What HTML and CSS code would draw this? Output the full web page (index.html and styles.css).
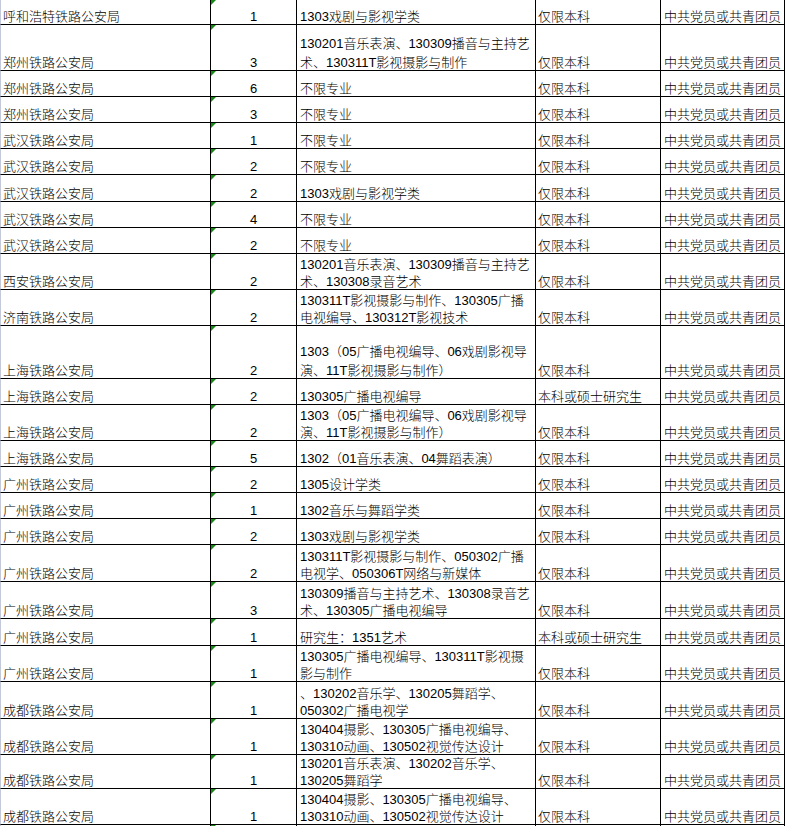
FILE: index.html
```html
<!DOCTYPE html>
<html lang="zh-CN">
<head>
<meta charset="utf-8">
<title>铁路公安局招录岗位表</title>
<link rel="stylesheet" href="styles.css">
</head>
<body>
<div class="sheet">
  <div class="row r25"><div class="c c1">呼和浩特铁路公安局</div><div class="c c2">1</div><div class="c c3">1303戏剧与影视学类</div><div class="c c4">仅限本科</div><div class="c c5">中共党员或共青团员</div></div>
  <div class="row r46 loose"><div class="c c1">郑州铁路公安局</div><div class="c c2">3</div><div class="c c3">130201音乐表演、130309播音与主持艺<br>术、130311T影视摄影与制作</div><div class="c c4">仅限本科</div><div class="c c5">中共党员或共青团员</div></div>
  <div class="row r26"><div class="c c1">郑州铁路公安局</div><div class="c c2">6</div><div class="c c3">不限专业</div><div class="c c4">仅限本科</div><div class="c c5">中共党员或共青团员</div></div>
  <div class="row r26"><div class="c c1">郑州铁路公安局</div><div class="c c2">3</div><div class="c c3">不限专业</div><div class="c c4">仅限本科</div><div class="c c5">中共党员或共青团员</div></div>
  <div class="row r26"><div class="c c1">武汉铁路公安局</div><div class="c c2">1</div><div class="c c3">不限专业</div><div class="c c4">仅限本科</div><div class="c c5">中共党员或共青团员</div></div>
  <div class="row r26"><div class="c c1">武汉铁路公安局</div><div class="c c2">2</div><div class="c c3">不限专业</div><div class="c c4">仅限本科</div><div class="c c5">中共党员或共青团员</div></div>
  <div class="row r27"><div class="c c1">武汉铁路公安局</div><div class="c c2">2</div><div class="c c3">1303戏剧与影视学类</div><div class="c c4">仅限本科</div><div class="c c5">中共党员或共青团员</div></div>
  <div class="row r26"><div class="c c1">武汉铁路公安局</div><div class="c c2">4</div><div class="c c3">不限专业</div><div class="c c4">仅限本科</div><div class="c c5">中共党员或共青团员</div></div>
  <div class="row r26"><div class="c c1">武汉铁路公安局</div><div class="c c2">2</div><div class="c c3">不限专业</div><div class="c c4">仅限本科</div><div class="c c5">中共党员或共青团员</div></div>
  <div class="row r36"><div class="c c1">西安铁路公安局</div><div class="c c2">2</div><div class="c c3">130201音乐表演、130309播音与主持艺<br>术、130308录音艺术</div><div class="c c4">仅限本科</div><div class="c c5">中共党员或共青团员</div></div>
  <div class="row r36"><div class="c c1">济南铁路公安局</div><div class="c c2">2</div><div class="c c3">130311T影视摄影与制作、130305广播<br>电视编导、130312T影视技术</div><div class="c c4">仅限本科</div><div class="c c5">中共党员或共青团员</div></div>
  <div class="row r53 loose"><div class="c c1">上海铁路公安局</div><div class="c c2">2</div><div class="c c3">1303（05广播电视编导、06戏剧影视导<br>演、11T影视摄影与制作）</div><div class="c c4">仅限本科</div><div class="c c5">中共党员或共青团员</div></div>
  <div class="row r26"><div class="c c1">上海铁路公安局</div><div class="c c2">2</div><div class="c c3">130305广播电视编导</div><div class="c c4">本科或硕士研究生</div><div class="c c5">中共党员或共青团员</div></div>
  <div class="row r36"><div class="c c1">上海铁路公安局</div><div class="c c2">2</div><div class="c c3">1303（05广播电视编导、06戏剧影视导<br>演、11T影视摄影与制作）</div><div class="c c4">仅限本科</div><div class="c c5">中共党员或共青团员</div></div>
  <div class="row r26"><div class="c c1">上海铁路公安局</div><div class="c c2">5</div><div class="c c3">1302（01音乐表演、04舞蹈表演）</div><div class="c c4">仅限本科</div><div class="c c5">中共党员或共青团员</div></div>
  <div class="row r26"><div class="c c1">广州铁路公安局</div><div class="c c2">2</div><div class="c c3">1305设计学类</div><div class="c c4">仅限本科</div><div class="c c5">中共党员或共青团员</div></div>
  <div class="row r26"><div class="c c1">广州铁路公安局</div><div class="c c2">1</div><div class="c c3">1302音乐与舞蹈学类</div><div class="c c4">仅限本科</div><div class="c c5">中共党员或共青团员</div></div>
  <div class="row r26"><div class="c c1">广州铁路公安局</div><div class="c c2">2</div><div class="c c3">1303戏剧与影视学类</div><div class="c c4">仅限本科</div><div class="c c5">中共党员或共青团员</div></div>
  <div class="row r37"><div class="c c1">广州铁路公安局</div><div class="c c2">2</div><div class="c c3">130311T影视摄影与制作、050302广播<br>电视学、050306T网络与新媒体</div><div class="c c4">仅限本科</div><div class="c c5">中共党员或共青团员</div></div>
  <div class="row r37"><div class="c c1">广州铁路公安局</div><div class="c c2">3</div><div class="c c3">130309播音与主持艺术、130308录音艺<br>术、130305广播电视编导</div><div class="c c4">仅限本科</div><div class="c c5">中共党员或共青团员</div></div>
  <div class="row r27"><div class="c c1">广州铁路公安局</div><div class="c c2">1</div><div class="c c3">研究生：1351艺术</div><div class="c c4">本科或硕士研究生</div><div class="c c5">中共党员或共青团员</div></div>
  <div class="row r36"><div class="c c1">广州铁路公安局</div><div class="c c2">1</div><div class="c c3">130305广播电视编导、130311T影视摄<br>影与制作</div><div class="c c4">仅限本科</div><div class="c c5">中共党员或共青团员</div></div>
  <div class="row r37"><div class="c c1">成都铁路公安局</div><div class="c c2">1</div><div class="c c3">、130202音乐学、130205舞蹈学、<br>050302广播电视学</div><div class="c c4">仅限本科</div><div class="c c5">中共党员或共青团员</div></div>
  <div class="row r36"><div class="c c1">成都铁路公安局</div><div class="c c2">1</div><div class="c c3">130404摄影、130305广播电视编导、<br>130310动画、130502视觉传达设计</div><div class="c c4">仅限本科</div><div class="c c5">中共党员或共青团员</div></div>
  <div class="row r34"><div class="c c1">成都铁路公安局</div><div class="c c2">1</div><div class="c c3">130201音乐表演、130202音乐学、<br>130205舞蹈学</div><div class="c c4">仅限本科</div><div class="c c5">中共党员或共青团员</div></div>
  <div class="row r36"><div class="c c1">成都铁路公安局</div><div class="c c2">1</div><div class="c c3">130404摄影、130305广播电视编导、<br>130310动画、130502视觉传达设计</div><div class="c c4">仅限本科</div><div class="c c5">中共党员或共青团员</div></div>
  <div class="row r26"><div class="c c1"></div><div class="c c2"></div><div class="c c3"></div><div class="c c4"></div><div class="c c5"></div></div>
</div>
</body>
</html>
```

FILE: styles.css
```css
html, body {
  margin: 0;
  padding: 0;
  background: #ffffff;
  overflow: hidden;
}

.sheet {
  font-family: "Liberation Sans", "Noto Sans CJK SC", sans-serif;
  font-size: 13px;
  font-weight: 300;
  color: #000000;
  width: 785px;
}

.row {
  display: grid;
  grid-template-columns: 211px 86px 239px 125px 124px;
  box-sizing: border-box;
  line-height: 17px;
}

.row.loose { line-height: 19px; }

.r25 { height: 25px; }
.r26 { height: 26px; }
.r27 { height: 27px; }
.r34 { height: 34px; }
.r36 { height: 36px; }
.r37 { height: 37px; }
.r46 { height: 46px; }
.r53 { height: 53px; }

.c {
  box-sizing: border-box;
  display: flex;
  flex-direction: column;
  justify-content: flex-end;
  border-right: 1px solid #000000;
  border-bottom: 1px solid #000000;
  white-space: nowrap;
  overflow: hidden;
  padding: 0 0 0 2px;
}

/* nudges the bottom-aligned text one pixel lower, as in the sheet */
.c::after {
  content: "";
  margin-top: -1px;
}

.loose .c::after {
  margin-top: -2px;
}

.c1 {
  border-left: 1px solid #c3c9d9;
  padding-left: 2px;
}

.c2 {
  position: relative;
  text-align: center;
  padding-left: 0;
}

.c2::before {
  content: "";
  position: absolute;
  top: 0;
  left: 0;
  width: 0;
  height: 0;
  border-top: 5px solid #168a16;
  border-right: 5px solid transparent;
}

.c3 { padding-left: 3px; }
.c4 { padding-left: 2px; }
.c5 { padding-left: 3px; }
```
